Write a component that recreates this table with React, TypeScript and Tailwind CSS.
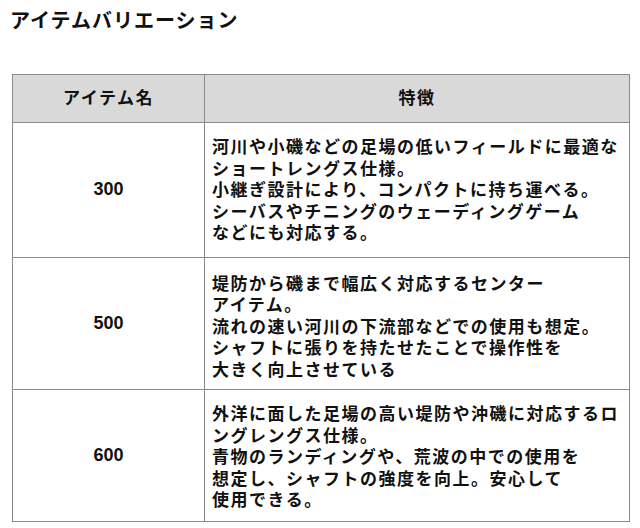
import React from "react";

const rows = [
  {
    name: "300",
    pad: "pt-[14px] pb-[12px]",
    lines: [
      "河川や小磯などの足場の低いフィールドに最適な",
      "ショートレングス仕様。",
      "小継ぎ設計により、コンパクトに持ち運べる。",
      "シーバスやチニングのウェーディングゲーム",
      "などにも対応する。",
    ],
  },
  {
    name: "500",
    pad: "pt-[16px] pb-[8px]",
    lines: [
      "堤防から磯まで幅広く対応するセンター",
      "アイテム。",
      "流れの速い河川の下流部などでの使用も想定。",
      "シャフトに張りを持たせたことで操作性を",
      "大きく向上させている",
    ],
  },
  {
    name: "600",
    pad: "pt-[14px] pb-[9px]",
    lines: [
      "外洋に面した足場の高い堤防や沖磯に対応するロ",
      "ングレングス仕様。",
      "青物のランディングや、荒波の中での使用を",
      "想定し、シャフトの強度を向上。安心して",
      "使用できる。",
    ],
  },
];

export default function App() {
  return (
    <div
      className="w-[640px] h-[528px] bg-white text-[#111] overflow-hidden"
      style={{ fontFamily: '"Liberation Sans", "Noto Sans CJK JP", sans-serif' }}
    >
      <h1 className="pl-[10px] pt-[7px] text-[20px] leading-[28px] font-bold tracking-[1px]">
        アイテムバリエーション
      </h1>
      <table className="mt-[39px] ml-[12px] w-[618px] border-collapse">
        <thead>
          <tr className="bg-[#d9d9d9]">
            <th className="w-[192px] h-[48px] border border-[#8a8a8a] text-[17px] font-bold tracking-[1.5px] text-center">
              アイテム名
            </th>
            <th className="h-[48px] border border-[#8a8a8a] text-[17px] font-bold tracking-[1.5px] text-center">
              特徴
            </th>
          </tr>
        </thead>
        <tbody>
          {rows.map((r) => (
            <tr key={r.name}>
              <td className="border border-[#8a8a8a] text-center text-[18px] font-bold">
                {r.name}
              </td>
              <td
                className={`border border-[#8a8a8a] pl-[7px] pr-1 ${r.pad} text-[17px] leading-[21.5px] font-bold tracking-[1.5px] whitespace-nowrap`}
              >
                {r.lines.map((l, i) => (
                  <div key={i}>{l}</div>
                ))}
              </td>
            </tr>
          ))}
        </tbody>
      </table>
    </div>
  );
}
